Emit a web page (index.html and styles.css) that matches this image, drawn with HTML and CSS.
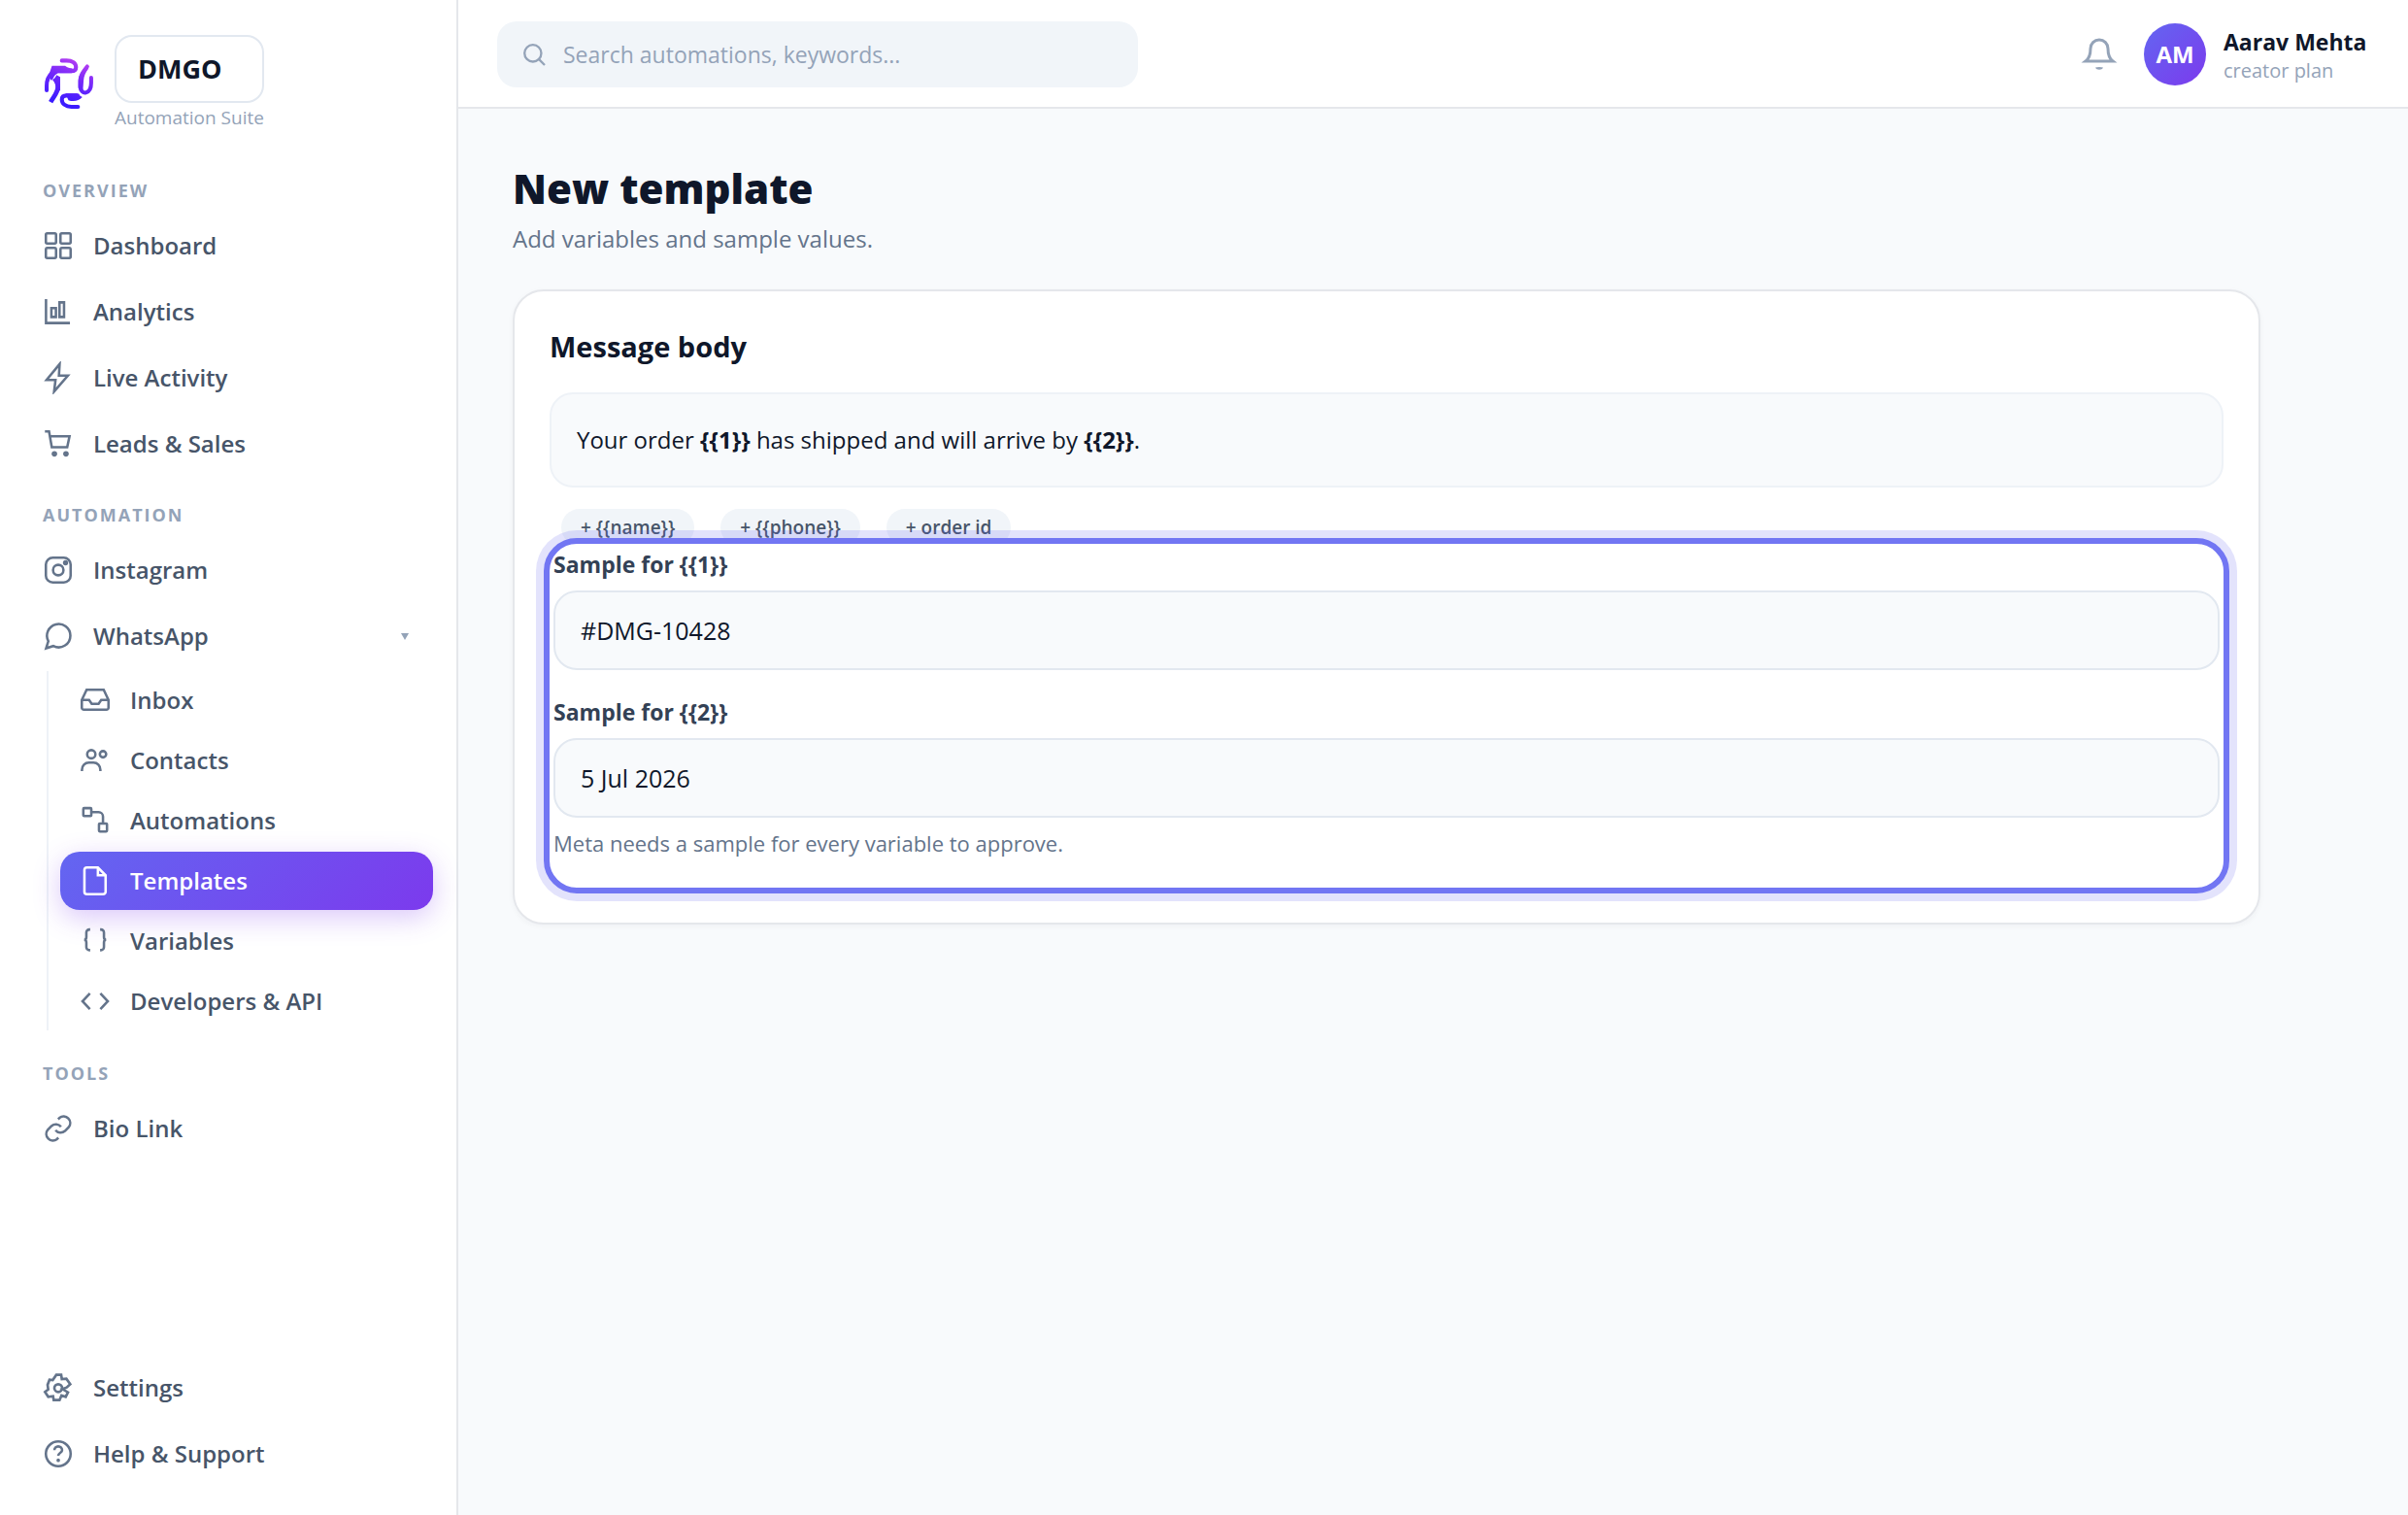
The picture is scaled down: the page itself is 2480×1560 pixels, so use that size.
FILE: index.html
```html
<!DOCTYPE html>
<html lang="en">
<head>
<meta charset="utf-8">
<meta name="viewport" content="width=device-width, initial-scale=1">
<title>New template – DMGO</title>
<link rel="stylesheet" href="styles.css">
</head>
<body>
<div class="app">
  <aside class="sidebar">
    <div class="brand">
      <svg class="brand-mark" viewBox="134 178 156 162" aria-hidden="true">
        <defs>
          <linearGradient id="mark" gradientUnits="userSpaceOnUse" x1="240" y1="190" x2="196" y2="320">
            <stop offset="0" stop-color="#b23df2"/>
            <stop offset=".45" stop-color="#7027fb"/>
            <stop offset="1" stop-color="#3a1bff"/>
          </linearGradient>
        </defs>
        <g fill="none" stroke="url(#mark)" stroke-width="12" stroke-linecap="round" stroke-linejoin="round">
          <path d="M189 188h14c18 0 29 8 29 20 0 8-6 12-14 12h-35"/>
          <path d="M143 278v-14c0-20 8-32 18-40"/>
          <path d="M177 240v28c0 16-8 22-22 46" stroke-linecap="butt" stroke-width="14"/>
          <path d="M266 206c-14 18-21 28-21 44v16c0 14 9 21 17 19 10-3 16-14 16-30v-15"/>
          <path d="M238 328h-20c-18 0-29-10-29-22 0-8 6-12 14-12h34"/>
        </g>
        <g fill="url(#mark)">
          <path d="M159 204h40c6 6 14 8 22 7l-2 15h-36c-10 0-16 6-20 15l-6 8-8-16z"/>
          <path d="M160 246c6-2 10-8 13-14l11 6v40l-12 8c0-18-2-30-12-40z"/>
          <path d="M262 204l8 8c-10 14-14 24-15 36l-2 28-14-4v-26c2-16 12-26 23-42z"/>
          <path d="M200 288h34l17 11c-10 12-28 14-42 9z"/>
        </g>
      </svg>
      <div class="brand-text">
        <strong class="brand-name">DMGO</strong>
        <span class="brand-tag">Automation Suite</span>
      </div>
    </div>

    <nav class="nav" aria-label="Main">
      <h2 class="nav-title">Overview</h2>
      <a class="nav-item" href="#dashboard">
        <svg class="icon" viewBox="0 0 24 24"><rect x="3" y="3" width="7.4" height="7.4" rx="1"/><rect x="13.6" y="3" width="7.4" height="7.4" rx="1"/><rect x="3" y="13.6" width="7.4" height="7.4" rx="1"/><rect x="13.6" y="13.6" width="7.4" height="7.4" rx="1"/></svg>
        Dashboard
      </a>
      <a class="nav-item" href="#analytics">
        <svg class="icon" viewBox="0 0 24 24"><path d="M3.1 2.8v17.4h17.4M7 9.4h3.3v6.4H7zM12.9 5.2h3.3v10.6h-3.3z"/></svg>
        Analytics
      </a>
      <a class="nav-item" href="#activity">
        <svg class="icon" viewBox="0 0 24 24"><path d="M13 2 3.5 13.6H10L9 22 19 10.4h-6.5z"/></svg>
        Live Activity
      </a>
      <a class="nav-item" href="#leads">
        <svg class="icon" viewBox="0 0 24 24"><path d="M2.3 3h3l2 11.5h11.2l1.7-8H6"/><circle class="solid" cx="9.2" cy="19.3" r="2"/><circle class="solid" cx="17.6" cy="19.3" r="2"/></svg>
        Leads &amp; Sales
      </a>

      <h2 class="nav-title">Automation</h2>
      <a class="nav-item" href="#instagram">
        <svg class="icon" viewBox="0 0 24 24"><rect x="3" y="3" width="18" height="18" rx="5"/><circle cx="12" cy="12" r="3.8"/><circle class="solid" cx="17.3" cy="6.7" r="1.9"/></svg>
        Instagram
      </a>
      <a class="nav-item" href="#whatsapp">
        <svg class="icon" viewBox="0 0 24 24"><path d="M20.8 11.6a8.5 8.5 0 0 1-12.4 7.6l-5.2 1.6 1.6-5.1A8.5 8.5 0 1 1 20.8 11.6z"/></svg>
        WhatsApp
        <svg class="caret" viewBox="0 0 8 7"><path d="M0 0h8L4 7z"/></svg>
      </a>
      <div class="subnav">
        <a class="nav-item" href="#inbox">
          <svg class="icon" viewBox="0 0 24 24"><path d="M2.3 11.8h5.3l1.9 2.8h5l1.9-2.8h5.3M5.8 4.4h12.4l3.5 7.4v5.6a1.5 1.5 0 0 1-1.5 1.5H3.8a1.5 1.5 0 0 1-1.5-1.5v-5.6z"/></svg>
          Inbox
        </a>
        <a class="nav-item" href="#contacts">
          <svg class="icon" viewBox="0 0 24 24"><circle cx="9.2" cy="7.5" r="3"/><circle cx="17.7" cy="7.5" r="2.3"/><path d="M2.4 19.8v-1c0-3 2.2-5.2 5-5.2h3.4c2.8 0 5 2.2 5 5.2v1"/></svg>
          Contacts
        </a>
        <a class="nav-item" href="#automations">
          <svg class="icon" viewBox="0 0 24 24"><rect x="3.4" y="2.9" width="5.8" height="5.8" rx=".6"/><rect x="14.8" y="14.1" width="5.8" height="5.8" rx=".6"/><path d="M9.2 5.8h5.3a3.2 3.2 0 0 1 3.2 3.2v5.1"/></svg>
          Automations
        </a>
        <a class="nav-item active" href="#templates" aria-current="page">
          <svg class="icon" viewBox="0 0 24 24"><path d="M14 2.3H6a1.8 1.8 0 0 0-1.8 1.8v15.8A1.8 1.8 0 0 0 6 21.7h11.8a1.8 1.8 0 0 0 1.8-1.8V8zM14 2.3V8h5.6"/></svg>
          Templates
        </a>
        <a class="nav-item" href="#variables">
          <svg class="icon" viewBox="0 0 24 24"><path d="M8.4 3.6h-.6a2.2 2.2 0 0 0-2.2 2.2v3.4c0 1.1-.6 1.9-1.6 1.9 1 0 1.6.8 1.6 1.9v3.4a2.2 2.2 0 0 0 2.2 2.2h.6M15.6 3.6h.6a2.2 2.2 0 0 1 2.2 2.2v3.4c0 1.1.6 1.9 1.6 1.9-1 0-1.6.8-1.6 1.9v3.4a2.2 2.2 0 0 1-2.2 2.2h-.6"/></svg>
          Variables
        </a>
        <a class="nav-item" href="#developers">
          <svg class="icon" viewBox="0 0 24 24"><path d="M8.2 6.3 2.8 12l5.4 5.7M15.8 6.3l5.4 5.7-5.4 5.7"/></svg>
          Developers &amp; API
        </a>
      </div>

      <h2 class="nav-title">Tools</h2>
      <a class="nav-item" href="#bio-link">
        <svg class="icon" viewBox="0 0 24 24"><path d="M10 13.2a4.7 4.7 0 0 0 6.9.6l2.7-2.7a4.8 4.8 0 0 0-6.7-6.8l-1 1M14 10.8a4.7 4.7 0 0 0-6.9-.6l-2.7 2.7a4.8 4.8 0 0 0 6.7 6.8l1-1"/></svg>
        Bio Link
      </a>
    </nav>

    <nav class="nav nav-footer" aria-label="Support">
      <a class="nav-item" href="#settings">
        <svg class="icon icon-gear" viewBox="129 91 102 102"><circle cx="180" cy="143" r="12"/><path d="M174 102h15l2 13 14-1 12 17-11 10-13 5 17 10-7 14-13-4-6 14h-18l-2-12-15 2-10-15 10-8-2-14 6-16 10 1z"/></svg>
        Settings
      </a>
      <a class="nav-item" href="#help">
        <svg class="icon" viewBox="0 0 24 24"><circle cx="12" cy="12" r="9"/><path d="M9.2 9.4a2.8 2.8 0 0 1 5.6 0c0 1.9-2.8 2-2.8 4"/><circle class="solid" cx="12" cy="16.7" r="1.3"/></svg>
        Help &amp; Support
      </a>
    </nav>
  </aside>

  <div class="workspace">
    <header class="topbar">
      <label class="search">
        <svg class="search-icon" viewBox="0 0 24 24" aria-hidden="true"><circle cx="11" cy="11" r="7.4"/><path d="m16.4 16.4 5 5"/></svg>
        <input type="search" placeholder="Search automations, keywords..." aria-label="Search automations, keywords">
      </label>
      <div class="account">
        <button class="bell" type="button" aria-label="Notifications">
          <svg viewBox="0 0 40 36"><path d="M6 25c4-3 5-8 5-13a9 9 0 0 1 18 0c0 5 1 10 5 13z"/><path class="solid" d="M16 31.5c2-.8 6-.8 8 0-1 3-7 3-8 0z"/></svg>
        </button>
        <span class="avatar">AM</span>
        <div class="user">
          <span class="user-name">Aarav Mehta</span>
          <span class="user-plan">creator plan</span>
        </div>
      </div>
    </header>

    <main class="content">
      <h1 class="page-title">New template</h1>
      <p class="page-subtitle">Add variables and sample values.</p>

      <section class="card">
        <h2 class="card-title">Message body</h2>
        <p class="message">Your order <b>{{1}}</b> has shipped and will arrive by <b>{{2}}</b>.</p>
        <div class="chips">
          <button class="chip" type="button">+ {{name}}</button>
          <button class="chip" type="button">+ {{phone}}</button>
          <button class="chip" type="button">+ order id</button>
        </div>
        <form class="samples">
          <div class="field">
            <label for="sample-1">Sample for {{1}}</label>
            <input id="sample-1" type="text" value="#DMG-10428">
          </div>
          <div class="field">
            <label for="sample-2">Sample for {{2}}</label>
            <input id="sample-2" type="text" value="5 Jul 2026">
            <p class="hint">Meta needs a sample for every variable to approve.</p>
          </div>
        </form>
      </section>
    </main>
  </div>
</div>
</body>
</html>
```
FILE: styles.css
```css
* {
  box-sizing: border-box;
}

body {
  margin: 0;
  background: #f8fafc;
  color: #0f172a;
  font-family: "Open Sans", "Noto Sans", sans-serif;
  font-size: 24px;
  line-height: 36px;
}

h1, h2, p {
  margin: 0;
}

button, input {
  font: inherit;
  color: inherit;
}

.app {
  display: flex;
  min-height: 100vh;
}

/* Sidebar */

.sidebar {
  display: flex;
  flex-direction: column;
  flex: 0 0 472px;
  padding: 36px 24px 30px;
  background: #fff;
  border-right: 2px solid #e5e7eb;
}

.brand {
  display: flex;
  align-items: center;
  gap: 20px;
  padding-left: 21px;
}

.brand-mark {
  width: 53px;
  height: 55px;
}

.brand-text {
  display: flex;
  flex-direction: column;
}

.brand-name {
  padding: 0 22px;
  border: 2px solid #e2e8f0;
  border-radius: 18px;
  font-size: 27px;
  font-weight: 700;
  line-height: 66px;
}

.brand-tag {
  color: #94a3b8;
  font-size: 19px;
  line-height: 30px;
}

.nav {
  display: flex;
  flex-direction: column;
  gap: 2px;
  padding-top: 22px;
}

.nav-title {
  margin: 26px 0 10px;
  padding-left: 20px;
  color: #94a3b8;
  font-size: 18px;
  font-weight: 700;
  line-height: 24px;
  letter-spacing: 2px;
  text-transform: uppercase;
}

.nav-item {
  display: flex;
  align-items: center;
  gap: 19px;
  height: 66px;
  padding: 0 25px 0 19px;
  border-radius: 20px;
  color: #475569;
  font-weight: 600;
  text-decoration: none;
}

.icon {
  flex: none;
  width: 34px;
  height: 34px;
  fill: none;
  stroke: #64748b;
  stroke-width: 1.8;
}

.icon .solid {
  fill: #64748b;
  stroke: none;
}

.icon-gear {
  stroke-width: 8;
}

.caret {
  width: 8px;
  height: 7px;
  margin-left: auto;
  fill: #94a3b8;
}

.subnav {
  display: flex;
  flex-direction: column;
  gap: 2px;
  margin: 1px 0 4px 24px;
  padding-left: 12px;
  border-left: 2px solid #eef2f7;
}

.subnav .nav-item {
  height: 60px;
}

.nav-item.active {
  background: linear-gradient(135deg, #6366f1, #7c3aed);
  box-shadow: 0 8px 28px rgba(124, 58, 237, .28);
  color: #fff;
}

.active .icon {
  stroke: #fff;
}

.nav-footer {
  margin-top: auto;
}

/* Top bar */

.workspace {
  display: flex;
  flex-direction: column;
  flex: 1;
  min-width: 0;
}

.topbar {
  display: flex;
  align-items: center;
  justify-content: space-between;
  min-height: 112px;
  padding: 2px 40px 0;
  background: #fff;
  border-bottom: 2px solid #e5e7eb;
}

.search {
  display: flex;
  align-items: center;
  gap: 16px;
  flex: 0 1 660px;
  height: 68px;
  padding: 0 24px;
  border-radius: 20px;
  background: #f1f5f9;
}

.search-icon {
  flex: none;
  width: 28px;
  height: 28px;
  fill: none;
  stroke: #94a3b8;
  stroke-width: 2;
}

.search input {
  flex: 1;
  min-width: 0;
  padding: 0;
  border: 0;
  outline: 0;
  background: none;
  font-size: 23px;
}

.search input::placeholder {
  color: #94a3b8;
}

.account {
  display: flex;
  align-items: center;
}

.bell {
  display: flex;
  margin-right: 26px;
  padding: 0;
  border: 0;
  background: none;
}

.bell svg {
  width: 40px;
  height: 36px;
  fill: none;
  stroke: #94a3b8;
  stroke-width: 3;
}

.bell .solid {
  fill: #94a3b8;
  stroke: none;
}

.avatar {
  width: 64px;
  height: 64px;
  margin-right: 18px;
  border-radius: 50%;
  background: linear-gradient(135deg, #6366f1, #7c3aed);
  color: #fff;
  font-weight: 700;
  line-height: 64px;
  text-align: center;
}

.user {
  display: flex;
  flex-direction: column;
  min-width: 150px;
  padding-top: 4px;
  line-height: 30px;
}

.user-name {
  font-size: 23px;
  font-weight: 700;
}

.user-plan {
  color: #94a3b8;
  font-size: 20px;
}

/* Page */

.content {
  padding: 56px;
}

.page-title {
  font-size: 42px;
  font-weight: 800;
  line-height: 52px;
}

.page-subtitle {
  margin-top: 8px;
  color: #64748b;
}

.card {
  max-width: 1800px;
  margin-top: 34px;
  padding: 36px 36px 30px;
  border: 2px solid #e5e7eb;
  border-radius: 32px;
  background: #fff;
  box-shadow: 0 2px 6px rgba(15, 23, 42, .04);
}

.card-title {
  font-size: 29px;
  font-weight: 700;
  line-height: 42px;
}

.message {
  margin-top: 26px;
  padding: 29px 26px;
  border: 2px solid #eef2f7;
  border-radius: 24px;
  background: #f8fafc;
}

.chips {
  display: flex;
  gap: 27px;
  margin-top: 22px;
  padding-left: 12px;
}

.chip {
  height: 38px;
  padding: 0 20px;
  border: 0;
  border-radius: 19px;
  background: #f1f5f9;
  color: #475569;
  font-size: 19px;
  font-weight: 600;
}

/* The highlighted group tucks over the lower edge of the chips */
.samples {
  position: relative;
  display: flex;
  flex-direction: column;
  gap: 24px;
  margin: -8px -6px 0;
  padding: 4px 4px 30px;
  border: 6px solid #7276f3;
  border-radius: 34px;
  background: #fff;
  box-shadow: 0 0 0 8px rgba(99, 102, 241, .18);
}

.field {
  display: flex;
  flex-direction: column;
  gap: 10px;
}

.field label {
  color: #334155;
  font-size: 23px;
  font-weight: 700;
  line-height: 34px;
}

.field + .field {
  padding-top: 2px;
}

.field input {
  width: 100%;
  height: 82px;
  padding: 0 26px;
  border: 2px solid #e2e8f0;
  border-radius: 24px;
  background: #f8fafc;
  font-size: 25px;
}

.hint {
  color: #64748b;
  font-size: 22px;
  line-height: 32px;
}
```
